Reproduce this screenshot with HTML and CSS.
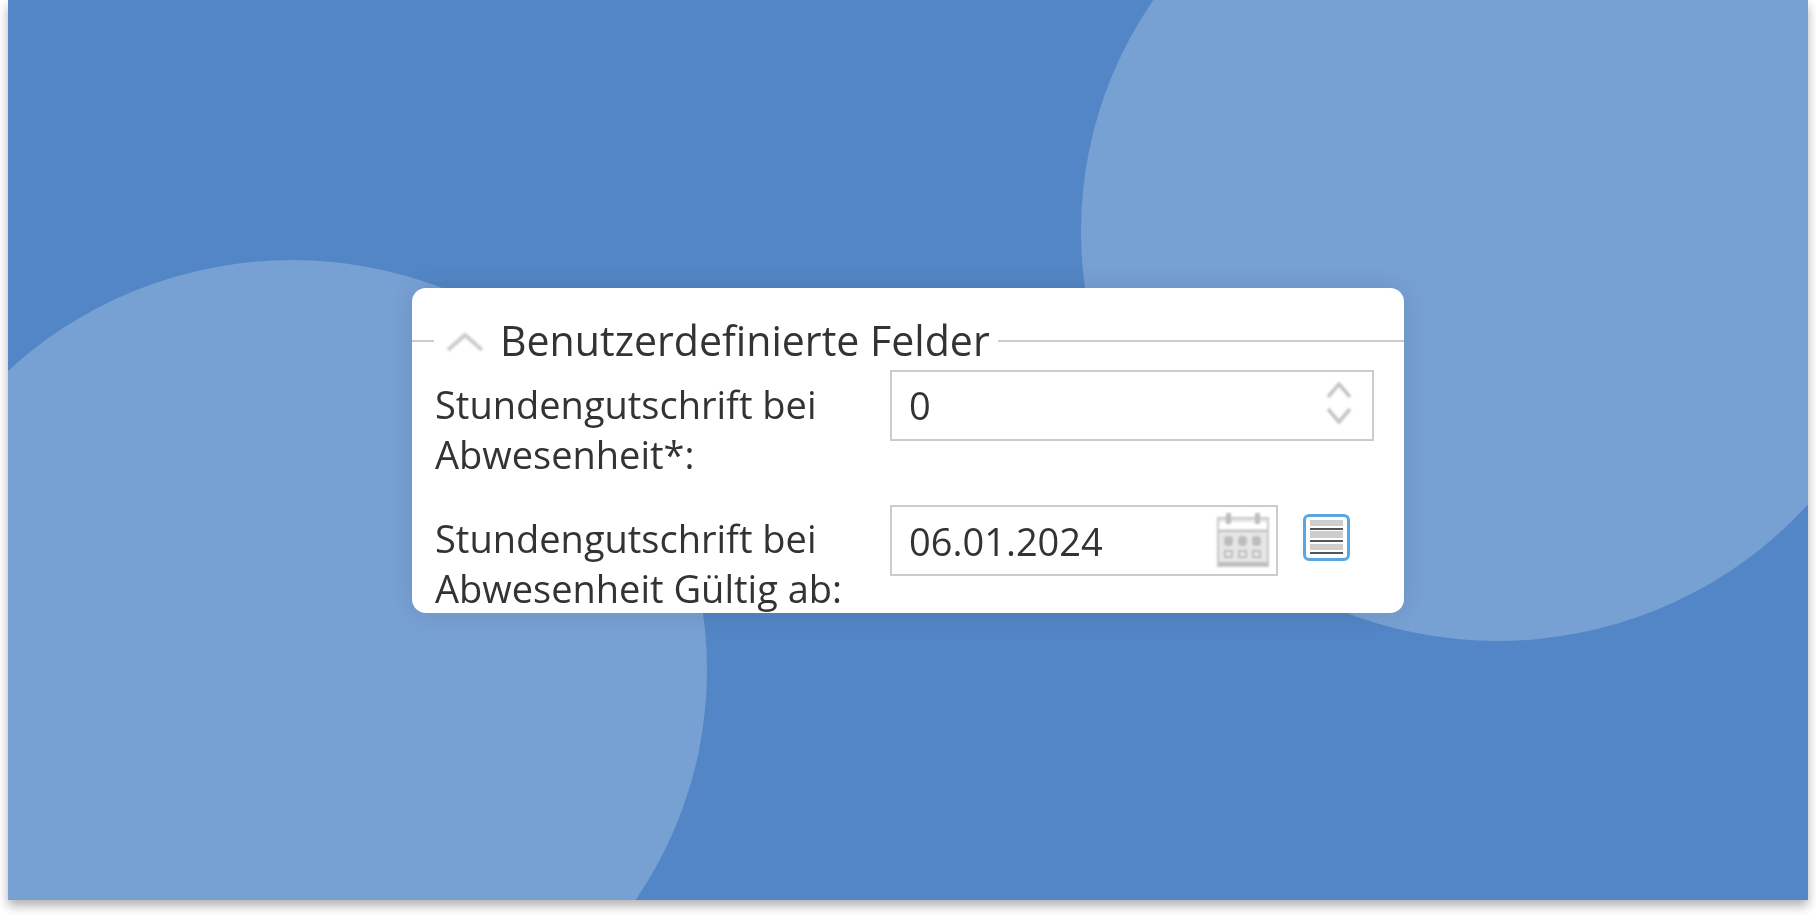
FILE: index.html
```html
<!DOCTYPE html>
<html lang="de">
<head>
<meta charset="utf-8">
<title>Benutzerdefinierte Felder</title>
<link rel="stylesheet" href="styles.css">
</head>
<body>
<div class="frame">
  <div class="backdrop">
    <div class="circle circle-left"></div>
    <div class="circle circle-right"></div>
  </div>
  <section class="card">
    <header class="legend">
      <span class="rule rule-short"></span>
      <svg class="chevron soft" width="38" height="20" viewBox="0 0 38 20"><path d="M2 18 L19 3 L36 18" fill="none" stroke="#cdcdcd" stroke-width="4"/></svg>
      <h2 class="legend-title">Benutzerdefinierte Felder</h2>
      <span class="rule rule-long"></span>
    </header>
    <div class="fields">
      <label class="field-label">Stundengutschrift bei Abwesenheit*:</label>
      <div class="control">
        <div class="input input-number">
          <span class="value">0</span>
          <svg class="spinner soft" width="26" height="42" viewBox="0 0 26 42"><path d="M2 15 L13 2 L24 15 M2 27 L13 40 L24 27" fill="none" stroke="#c4c4c4" stroke-width="3.5"/></svg>
        </div>
      </div>
      <label class="field-label field-label-lower">Stundengutschrift bei Abwesenheit Gültig ab:</label>
      <div class="control control-date">
        <div class="input input-date">
          <span class="value value-date">06.01.2024</span>
          <svg class="calendar soft" width="54" height="56" viewBox="0 0 54 56">
            <rect x="2" y="6" width="50" height="48" fill="#e6e6e6" stroke="#c8c8c8" stroke-width="2"/>
            <rect x="3" y="10" width="48" height="7" fill="#fff"/>
            <rect x="3" y="18" width="48" height="2" fill="#c0c0c0"/>
            <rect x="3" y="50" width="48" height="4" fill="#bebebe"/>
            <rect x="10" y="1" width="5" height="11" fill="#bebebe"/>
            <rect x="39" y="1" width="5" height="11" fill="#bebebe"/>
            <g fill="#bdbdbd">
              <rect x="8" y="24" width="9" height="10" rx="4"/>
              <rect x="22" y="24" width="9" height="10" rx="4"/>
              <rect x="36" y="24" width="9" height="10" rx="4"/>
            </g>
            <g fill="#ececec" stroke="#bdbdbd" stroke-width="2">
              <rect x="9" y="39" width="7" height="6"/>
              <rect x="23" y="39" width="7" height="6"/>
              <rect x="37" y="39" width="7" height="6"/>
            </g>
          </svg>
        </div>
        <button class="list-button" type="button" aria-label="Liste">
          <svg class="soft-light" width="33" height="34" viewBox="0 0 33 34">
            <rect x="0" y="0" width="33" height="6" fill="#cdcdcd"/>
            <rect x="0" y="8" width="33" height="2" fill="#555"/>
            <rect x="0" y="11" width="33" height="7" fill="#cdcdcd"/>
            <rect x="0" y="20" width="33" height="2" fill="#555"/>
            <rect x="0" y="24" width="33" height="6" fill="#cdcdcd"/>
            <rect x="0" y="32" width="33" height="2" fill="#555"/>
          </svg>
        </button>
      </div>
    </div>
  </section>
</div>
</body>
</html>
```

FILE: styles.css
```css
* { box-sizing: border-box; }

html, body { margin: 0; background: #fff; }

body {
  width: 1816px;
  height: 916px;
  padding: 0 8px 16px;
  overflow: hidden;
  font-family: "Open Sans", "Noto Sans", sans-serif;
  color: #333;
}

.frame {
  position: relative;
  height: 900px;
  display: flex;
  align-items: center;
  justify-content: center;
  background: #5386c6;
  box-shadow: 0 6px 10px rgba(0, 0, 0, 0.3);
}

.backdrop {
  position: absolute;
  inset: 0;
  overflow: hidden;
}

.circle {
  position: absolute;
  border-radius: 50%;
  background: #77a0d3;
}

.circle-left { left: -131px; top: 259.5px; width: 830px; height: 820px; }
.circle-right { left: 1072.5px; top: -179.5px; width: 833px; height: 820px; }

.card {
  position: relative;
  width: 992px;
  height: 325px;
  background: #fff;
  border-radius: 14px;
  overflow: hidden;
  padding-top: 24px;
  box-shadow: 0 0 24px rgba(0, 0, 0, 0.1);
}

.soft { filter: blur(1px); }
.soft-light { filter: blur(0.7px); }

.legend {
  display: flex;
  align-items: center;
  height: 58px;
}

.rule { height: 2px; background: #ccc; }
.rule-short { width: 22px; margin-right: 12px; }
.rule-long { flex: 1; margin-left: 8px; }

.chevron { flex: none; margin-right: 16px; margin-top: 3px; }

.legend-title {
  margin: -2px 0 0;
  font-size: 41.1px;
  line-height: 58px;
  font-weight: 400;
  color: #333;
  filter: blur(0.4px);
}

.fields {
  display: grid;
  grid-template-columns: 455px 1fr;
  row-gap: 25px;
  padding-left: 23px;
}

.field-label {
  font-size: 38px;
  line-height: 50px;
  margin-top: 9px;
  padding-bottom: 1px;
  padding-right: 20px;
  filter: blur(0.4px);
}

.field-label-lower { margin-top: 8px; }

.control { display: flex; align-items: flex-start; }

.input {
  display: flex;
  align-items: center;
  justify-content: space-between;
  height: 71px;
  border: 2px solid #ccc;
  padding-left: 17px;
}

.input-number { width: 484px; padding-right: 20px; }
.input-date { width: 388px; padding-right: 6px; }

.spinner { margin-bottom: 4px; }

.value { font-size: 38px; line-height: 50px; filter: blur(0.4px); }
.value-date { margin-top: 2px; }

.list-button {
  width: 47px;
  height: 47px;
  margin: 9px 0 0 25px;
  padding: 0;
  display: flex;
  align-items: center;
  justify-content: center;
  background: #fff;
  border: 3px solid #5aa6e2;
  border-radius: 6px;
}
```
